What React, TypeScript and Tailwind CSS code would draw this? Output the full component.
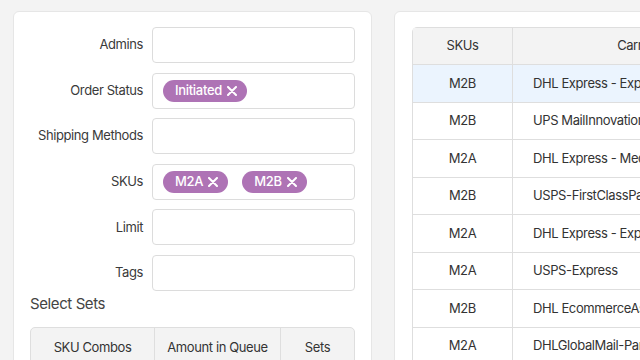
import React from "react";

const font = { fontFamily: "Inter, 'Noto Sans', sans-serif" };

function Pill({ text }: { text: string }) {
  return (
    <span className="inline-flex items-center h-[22px] rounded-full bg-[#ae73b5] pl-3 pr-[10px] text-[13px] font-medium text-white gap-[5px] tracking-[-0.3px]">
      {text}
      <svg width="10" height="10" viewBox="0 0 10 10" className="mt-[1px]">
        <path d="M1 1 L9 9 M9 1 L1 9" stroke="white" strokeWidth="2" strokeLinecap="round" />
      </svg>
    </span>
  );
}

function Field({ label, last, children }: { label: string; last?: boolean; children?: React.ReactNode }) {
  return (
    <div className={`flex items-center h-[36px] ${last ? "" : "mb-[9.6px]"}`}>
      <div className="w-[122px] text-right text-[13px] text-[#3a3a3a] pr-[9px] shrink-0 whitespace-nowrap">{label}</div>
      <div className="w-[203px] h-[36px] rounded-[4px] border border-[#dcdcdc] bg-white flex items-center pl-[10px] gap-[14px]">
        {children}
      </div>
    </div>
  );
}

const rows = [
  ["M2B", "DHL Express - Express Worldwide", true],
  ["M2B", "UPS MailInnovations", false],
  ["M2A", "DHL Express - Medical Express", false],
  ["M2B", "USPS-FirstClassPackage", false],
  ["M2A", "DHL Express - Express Worldwide", false],
  ["M2A", "USPS-Express", false],
  ["M2B", "DHL EcommerceAsia", false],
  ["M2A", "DHLGlobalMail-Parcel", false],
] as const;

export default function App() {
  return (
    <div className="w-[640px] h-[360px] overflow-hidden bg-[#f3f3f3] flex gap-[22px] pl-[13px] pt-[11px] tracking-[-0.4px]" style={font}>
      <div className="w-[359px] shrink-0 h-[400px] bg-white rounded-[6px] border border-[#e6e6e6] pt-[15px] pl-[16px]">
        <Field label="Admins" />
        <Field label="Order Status">
          <Pill text="Initiated" />
        </Field>
        <Field label="Shipping Methods" />
        <Field label="SKUs">
          <Pill text="M2A" />
          <Pill text="M2B" />
        </Field>
        <Field label="Limit" />
        <Field label="Tags" last />
        <div className="text-[15px] text-[#444] mt-[4px] leading-[18px]">Select Sets</div>
        <div className="mt-[14px] w-[325px] rounded-t-[5px] border border-[#dedede] bg-[#f3f3f3] flex h-[42px] text-[13px] text-[#333]">
          <div className="w-[124px] flex items-center justify-center border-r border-[#dedede]">SKU Combos</div>
          <div className="w-[126px] flex items-center justify-center border-r border-[#dedede]">Amount in Queue</div>
          <div className="flex-1 flex items-center justify-center">Sets</div>
        </div>
      </div>
      <div className="w-[400px] shrink-0 h-[400px] bg-white rounded-[6px] border border-[#e6e6e6] pt-[15px] pl-[17px]">
        <div className="w-[500px] rounded-tl-[5px] border border-[#dedede] text-[13px] text-[#333]">
          <div className="flex h-[37px] bg-[#f3f3f3] border-b border-[#dedede]">
            <div className="w-[100px] flex items-center justify-center border-r border-[#dedede]">SKUs</div>
            <div className="w-[296px] flex items-center justify-center border-r border-[#dedede]">Carrier Service</div>
            <div className="flex-1"></div>
          </div>
          {rows.map(([sku, carrier, sel], i) => (
            <div key={i} className={`flex h-[37.5px] border-b border-[#dedede] ${sel ? "bg-[#ebf4fe]" : "bg-white"}`}>
              <div className="w-[100px] flex items-center justify-center border-r border-[#dedede]">{sku}</div>
              <div className="w-[296px] flex items-center pl-[20px] whitespace-nowrap">{carrier}</div>
            </div>
          ))}
        </div>
      </div>
    </div>
  );
}
